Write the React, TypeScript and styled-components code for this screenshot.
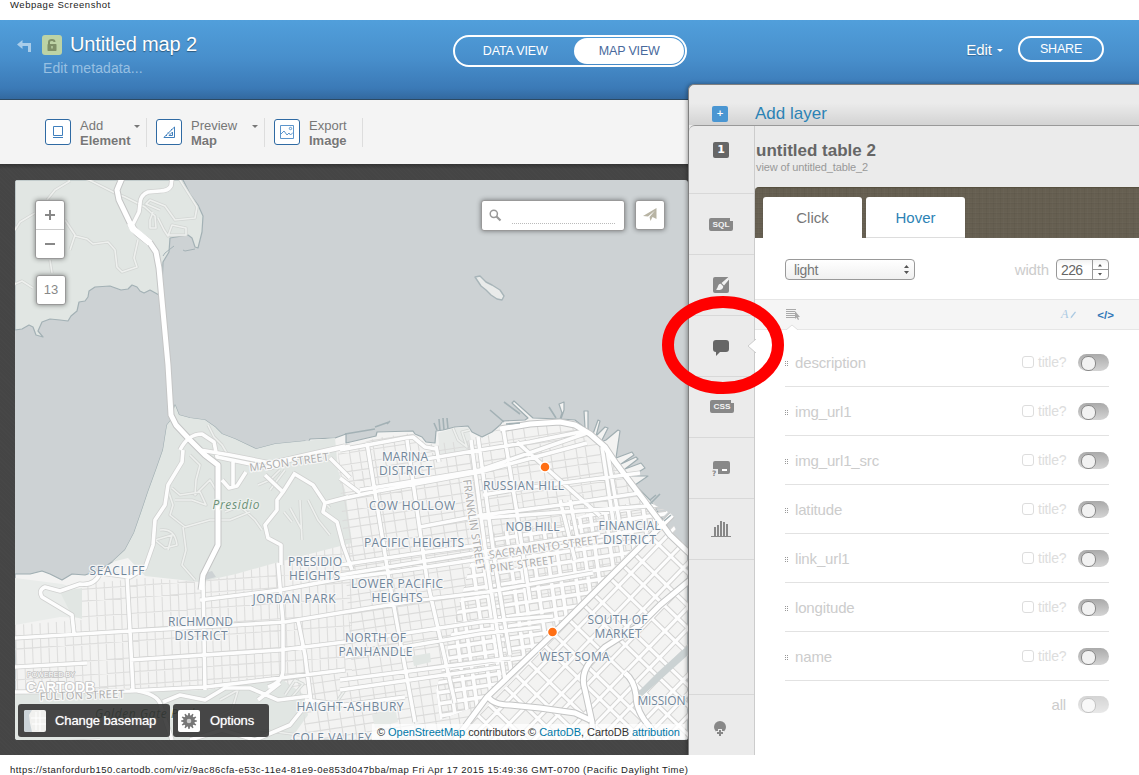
import React from "react";
import styled, { createGlobalStyle, css } from "styled-components";

const Global = createGlobalStyle`
  * { box-sizing: border-box; }
  html, body { margin: 0; padding: 0; background: #fff; }
  body { font-family: "Liberation Sans", Arial, sans-serif; overflow: hidden; }
`;

const Sheet = styled.div`
  width: 1139px;
  height: 775px;
  display: flex;
  flex-direction: column;
  color: #666;
`;

const PrintLine = styled.div<{ $bottom?: boolean }>`
  height: 20px;
  padding-left: 10px;
  font-size: 9.5px;
  letter-spacing: ${(p) => (p.$bottom ? 0.47 : 0.53)}px;
  line-height: ${(p) => (p.$bottom ? "29px" : "10px")};
  color: #222;
  white-space: nowrap;
`;

const AppFrame = styled.div`
  position: relative;
  height: 735px;
  display: flex;
  flex-direction: column;
  overflow: hidden;
`;

/* ---------- header ---------- */

const Header = styled.header`
  height: 80px;
  display: flex;
  align-items: flex-start;
  background: linear-gradient(#519fdb 0, #488fcc 38px, #3b7ab7 68px, #33699f 79px);
  border-bottom: 1px solid #2c4a63;
`;

const BackArrow = styled.svg`
  margin: 20px 0 0 17px;
  flex: none;
`;

const LockBadge = styled.div`
  width: 20px;
  height: 20px;
  margin: 15px 0 0 11px;
  border-radius: 3px;
  background: #bdd3a5;
  display: grid;
  place-items: center;
`;

const TitleBlock = styled.div`
  display: flex;
  flex: none;
  width: 453px;
`;

const MapTitle = styled.h1`
  margin: 12px 0 0 8px;
  font-size: 20px;
  line-height: 24px;
  letter-spacing: -0.15px;
  font-weight: 400;
  color: #fff;
  text-shadow: 0 1px 1px rgba(0, 0, 0, 0.4);
`;

const Metadata = styled.div`
  margin: 4px 0 0 -19px;
  font-size: 14px;
  line-height: 16px;
  letter-spacing: 0.1px;
  color: #98c0e2;
`;

const ViewSwitch = styled.div`
  width: 234px;
  height: 32px;
  margin-top: 15px;
  padding: 1px;
  display: flex;
  border: 2px solid #fff;
  border-radius: 16px;
`;

const ViewOption = styled.div<{ $active?: boolean }>`
  width: ${(p) => (p.$active ? 110 : 119)}px;
  height: 26px;
  border-radius: 13px;
  text-align: center;
  font-size: 12.5px;
  line-height: 26px;
  letter-spacing: -0.15px;
  color: ${(p) => (p.$active ? "#48699c" : "#fff")};
  background: ${(p) => (p.$active ? "#fff" : "transparent")};
`;

const HeaderActions = styled.div`
  margin-left: auto;
  padding: 16px 35px 0 0;
  display: flex;
  align-items: center;
`;

const EditLink = styled.div`
  font-size: 15px;
  line-height: 28px;
  color: #fff;
  display: flex;
  align-items: center;
  gap: 5px;
  text-shadow: 0 1px 1px rgba(0, 0, 0, 0.3);
`;

const Caret = styled.i<{ $color: string }>`
  border: 3px solid transparent;
  border-top-color: ${(p) => p.$color};
  border-bottom: 0;
`;

const ShareButton = styled.div`
  width: 86px;
  height: 26px;
  margin: -2px 0 0 15px;
  border: 2px solid #fff;
  border-radius: 13px;
  color: #fff;
  text-align: center;
  font-size: 12.5px;
  letter-spacing: -0.2px;
  line-height: 22px;
`;

/* ---------- toolbar ---------- */

const Toolbar = styled.div`
  height: 64px;
  padding: 18px 0 0 45px;
  display: flex;
  background: #f4f4f4;
`;

const Tool = styled.div<{ $width: number }>`
  width: ${(p) => p.$width}px;
  height: 29px;
  margin-right: 9px;
  display: flex;
  border-right: 1px solid #ddd;
`;

const ToolIcon = styled.div`
  width: 26px;
  height: 26px;
  margin-top: 1px;
  border: 1px solid #2f6aa3;
  border-radius: 3px;
  background: #fff;
  display: grid;
  place-items: center;
`;

const ToolText = styled.div`
  margin-left: 9px;
  font-size: 13px;
  line-height: 15px;
  color: #777;
  b { display: block; text-shadow: 0 1px 0 #fff; }
`;

const ToolCaret = styled(Caret)`
  margin: 7px 6px 0 auto;
  height: 3px;
`;

/* ---------- workspace / map ---------- */

const Workspace = styled.main`
  flex: 1;
  padding: 16px 0 15px 15px;
  background-color: #454545;
  background-image: linear-gradient(rgba(0, 0, 0, 0.25), transparent 5px),
    repeating-linear-gradient(45deg, rgba(255, 255, 255, 0.012) 0 1px, transparent 1px 3px);
`;

const MapCanvas = styled.div`
  position: relative;
  width: 673px;
  height: 560px;
  border-radius: 3px;
  overflow: hidden;
`;

const MapSvg = styled.svg`
  display: block;
`;

const control = css`
  position: absolute;
  background: #fff;
  border: 1px solid #999;
  border-radius: 3px;
  box-shadow: 0 0 5px rgba(0, 0, 0, 0.45);
`;

const ZoomControl = styled.div`
  ${control}
  left: 20px;
  top: 20px;
  width: 30px;
  height: 59px;
  display: flex;
  flex-direction: column;
`;

const ZoomButton = styled.div`
  flex: 1;
  display: grid;
  place-items: center;
  & + & { border-top: 1px solid #ccc; }
`;

const ZoomLevel = styled.div`
  ${control}
  left: 21px;
  top: 95px;
  width: 30px;
  height: 30px;
  text-align: center;
  font-size: 13px;
  line-height: 28px;
  color: #888;
`;

const SearchBox = styled.div`
  ${control}
  left: 466px;
  top: 20px;
  width: 144px;
  height: 31px;
  padding: 8px 9px 6px 7px;
  display: flex;
  gap: 10px;
`;

const SearchLine = styled.div`
  flex: 1;
  border-bottom: 1px dotted #bbb;
`;

const SendButton = styled.div`
  ${control}
  left: 620px;
  top: 20px;
  width: 30px;
  height: 30px;
  display: grid;
  place-items: center;
`;

const MapActions = styled.div`
  position: absolute;
  left: 3px;
  bottom: 3px;
  display: flex;
  gap: 3px;
`;

const MapAction = styled.div<{ $width: number }>`
  width: ${(p) => p.$width}px;
  height: 33px;
  padding-left: ${(p) => (p.$width > 100 ? 6 : 5)}px;
  border-radius: 3px;
  background: rgba(48, 48, 48, 0.88);
  display: flex;
  align-items: center;
  gap: ${(p) => (p.$width > 100 ? 9 : 10)}px;
  color: #fff;
  font-size: 13px;
  letter-spacing: -0.1px;
  text-shadow: 0 0 1px rgba(255, 255, 255, 0.7);
  svg { flex: none; }
`;

const Attribution = styled.div`
  position: absolute;
  left: 357px;
  bottom: 0;
  width: 313px;
  height: 16px;
  padding-left: 5px;
  background: rgba(255, 255, 255, 0.72);
  font-size: 11px;
  letter-spacing: -0.045px;
  line-height: 17px;
  white-space: nowrap;
  color: #333;
  span { color: #0078a8; }
`;

/* ---------- layer panel ---------- */

const LayerPanel = styled.aside`
  position: absolute;
  left: 688px;
  top: 64px;
  width: 451px;
  height: 671px;
  display: flex;
  flex-direction: column;
  background: #ebebeb;
  border: 1px solid #808080;
  border-width: 1px 0 0 1px;
  border-radius: 6px 0 0 0;
  box-shadow: -1px 0 4px rgba(0, 0, 0, 0.35);
`;

const AddLayer = styled.div`
  height: 40px;
  padding: 17px 0 0 23px;
  display: flex;
  gap: 27px;
  font-size: 17px;
  line-height: 23px;
  color: #2c83b5;
  background: linear-gradient(rgba(0, 0, 0, 0) 18px, rgba(0, 0, 0, 0.1) 40px);
  border-radius: 6px 0 0 0;
`;

const SquareBadge = styled.div<{ $color: string }>`
  width: 16px;
  height: 16px;
  border-radius: 2px;
  background: ${(p) => p.$color};
  color: #fff;
  text-align: center;
  font: bold 11px/16px "DejaVu Sans", sans-serif;
`;

const PlusBadge = styled(SquareBadge)`
  margin-top: 4px;
  font-size: 9px;
  line-height: 15px;
`;

const Layer = styled.section`
  flex: 1;
  display: flex;
  background: #ebebeb;
  border-top: 1px solid #999;
  border-radius: 6px 0 0 0;
`;

const Rail = styled.nav`
  width: 66px;
  border-right: 1px solid #ccc;
  display: flex;
  flex-direction: column;
`;

const RailCell = styled.div<{ $height?: number; $x?: number; $y?: number }>`
  position: relative;
  flex: none;
  height: ${(p) => p.$height ?? 61}px;
  padding-left: ${(p) => p.$x ?? 20}px;
  padding-top: ${(p) => p.$y ?? 20}px;
  border-bottom: 1px solid #d8d8d8;
  svg { display: block; }
  &:last-child { border-bottom: 0; }
`;

const ActiveNotch = styled.svg`
  position: absolute;
  right: -2px;
  top: 23px;
`;

const Content = styled.div`
  flex: 1;
  display: flex;
  flex-direction: column;
`;

const LayerHeading = styled.div`
  height: 61px;
  padding: 15px 0 0 1px;
  b { display: block; font-size: 17px; line-height: 19px; color: #666; }
  small { display: block; font-size: 11px; line-height: 15px; letter-spacing: -0.12px; color: #999; }
`;

const TabBar = styled.div`
  height: 51px;
  padding: 9px 0 0 8px;
  display: flex;
  gap: 4px;
  background-color: #665f51;
  background-image: repeating-linear-gradient(90deg, rgba(0, 0, 0, 0.035) 0 1px, transparent 1px 3px, rgba(255, 255, 255, 0.015) 3px 4px, transparent 4px 7px),
    repeating-linear-gradient(rgba(0, 0, 0, 0.04) 0 1px, transparent 1px 4px, rgba(255, 255, 255, 0.015) 4px 5px);
  border-radius: 4px 0 0 0;
  border-top: 1px solid #57503f;
`;

const Tab = styled.div<{ $active?: boolean }>`
  width: 99px;
  height: 41px;
  border-bottom: ${(p) => (p.$active ? "0" : "1px solid #ddd")};
  border-radius: 3px 3px 0 0;
  background: #fff;
  text-align: center;
  font-size: 15px;
  line-height: 42px;
  color: ${(p) => (p.$active ? "#777" : "#2c83b5")};
`;

const Form = styled.div`
  flex: 1;
  background: #fff;
  color: #ccc;
`;

const StyleRow = styled.div`
  height: 61px;
  padding: 21px 30px 0;
  display: flex;
  font-size: 15px;
`;

const Select = styled.div`
  width: 130px;
  height: 21px;
  padding: 0 5px 0 8px;
  border: 1px solid #999;
  border-radius: 4px;
  background: linear-gradient(#fff, #f0f0f0);
  display: flex;
  align-items: center;
  justify-content: space-between;
  font-size: 14px;
  letter-spacing: -0.3px;
  color: #777;
`;

const WidthLabel = styled.span`
  margin: 2px 7px 0 auto;
  letter-spacing: -0.15px;
  line-height: 18px;
`;

const Spinner = styled.div`
  width: 53px;
  height: 21px;
  padding-left: 4px;
  display: flex;
  border: 1px solid #999;
  border-radius: 4px;
  overflow: hidden;
  background: linear-gradient(#f2f2f2, #fff 6px);
  font-size: 14px;
  line-height: 20px;
  letter-spacing: -0.6px;
  color: #666;
  div { margin-left: auto; border-left: 1px solid #999; width: 16px; }
  svg { display: block; }
`;

const ModeBar = styled.div`
  position: relative;
  height: 31px;
  padding: 0 25px 0 31px;
  border: 1px solid #e6e6e6;
  border-width: 1px 0;
  background: #f5f5f5;
  display: flex;
  align-items: center;
`;

const ModeNotch = styled.svg`
  position: absolute;
  left: 31px;
  bottom: -1px;
`;

const CodeMark = styled.span`
  margin-left: 21px;
  font: bold 11.5px "Liberation Sans", sans-serif;
  color: #3178b8;
`;

const StyleMark = styled.span`
  margin-left: auto;
  display: flex;
  align-items: center;
  gap: 2px;
  font: italic 12px "Liberation Serif", serif;
  color: #aac9e2;
`;

const Fields = styled.div`
  padding: 8px 30px 0;
`;

const FieldRow = styled.div<{ $last?: boolean }>`
  height: ${(p) => (p.$last ? 47 : 49)}px;
  border-bottom: ${(p) => (p.$last ? "0" : "1px solid #e2e2e2")};
  display: flex;
  align-items: center;
`;

const GripMark = styled.svg`
  margin-top: 3px;
`;

const FieldName = styled.span`
  margin-left: 6px;
  font-size: 15px;
  letter-spacing: -0.15px;
`;

const CheckBox = styled.i`
  width: 12px;
  height: 12px;
  margin-left: auto;
  border: 1px solid #ddd;
  border-radius: 3px;
`;

const TitleLabel = styled.span<{ $all?: boolean }>`
  width: ${(p) => (p.$all ? "auto" : "28px")};
  margin: 0 12px 0 ${(p) => (p.$all ? "auto" : "4px")};
  font-size: ${(p) => (p.$all ? 15 : 14)}px;
  letter-spacing: -0.2px;
  color: ${(p) => (p.$all ? "#ccc" : "#ddd")};
`;

const Toggle = styled.i<{ $faded?: boolean }>`
  width: 31px;
  height: 17px;
  padding: 2px 0 0 3px;
  border-radius: 9px;
  background: linear-gradient(#aaa, #d4d4d4);
  opacity: ${(p) => (p.$faded ? 0.5 : 1)};
  &::before {
    content: "";
    display: block;
    width: 13px;
    height: 13px;
    border: 1px solid #888;
    border-radius: 7px;
    background: #f2f2f2;
  }
`;

const Highlight = styled.svg`
  position: absolute;
  left: 660px;
  top: 274px;
  pointer-events: none;
`;

/* ---------- map data ---------- */

const MARIN =
  "M15 180H183L190 194L198 205L203 216L202 232L198 248L195 247L192 238L188 235L170 238L169 252L163 262L162 285L159 295L150 290L144 293L140 291L137 287L132 285L128 289L121 290L110 286L95 287L89 291L88 297L85 301L79 302L77 311L71 316L68 321L60 320L50 319L42 322L38 331L43 337L36 335L33 327L29 325L22 329L15 330Z";

const CITY_LAND =
  "M15 574L30 574L42 571L50 574L62 580L72 574L85 575L100 570L112 562L125 550L134 533L142 510L148 492L156 470L163 450L167 425L171 420L175 405L179 415L190 418L205 420L215 427L222 434L235 439L256 449L275 444L305 441L307 445L310 439L335 438L346 434L346 443L376 436L377 432L413 431L415 434L422 437L426 442L435 443L436 431L443 430L455 427L468 426L472 432L482 437L492 432L500 425L503 421L525 420L528 418L512 403L514 401L533 418L560 419L562 413L559 404L564 402L564 410L561 419L575 420L585 428L584 411L588 411L588 430L593 434L598 420L600 421L596 436L605 427L608 428L601 442L606 440L618 430L620 431L616 458L632 452L634 455L621 464L636 457L638 459L625 469L641 463L645 468L632 476L648 476L635 485L650 500L665 523L672 535L688 552V740H15Z";

const PRESIDIO =
  "M112 562L125 550L134 533L142 510L148 492L156 470L163 450L167 425L171 420L175 405L179 415L190 418L205 420L215 427L222 434L235 439L256 449L275 444L305 441L335 438L338 470L345 490L352 543L275 563L236 574L200 582L145 576L128 558Z";

const RICHMOND = "M82 584L145 578L200 582L236 574L275 563L352 543L352 672L283 680L205 690L130 692L15 692V625L82 620Z";
const MIDTOWN =
  "M338 452L376 438L413 433L426 444L482 440L500 427L560 420L588 432L610 455L640 494L668 512L455 735L452 740H305L303 700L283 680L352 672Z";
const DOWNTOWN = "M478 535L560 522L600 510L645 500L668 512L480 705L440 720L436 690Z";
const SOMA = "M668 515L688 552V740H455Z";

const GG_PARK = "M15 694L130 692L205 690L283 680L303 694L308 715L290 740H15Z";

type Pt = [number, number];

/* Parallel street lines through a centre point, turned by an angle in degrees. */
function streets(angle: number, [cx, cy]: Pt, step: number, count: number, reach: number, wobble = 0) {
  const a = (angle * Math.PI) / 180;
  const dx = Math.cos(a);
  const dy = Math.sin(a);
  let d = "";
  for (let i = -count; i <= count; i++) {
    const off = i * step + (wobble ? Math.sin(i * 2.3) * wobble : 0);
    const x = cx - dy * off;
    const y = cy + dx * off;
    d += `M${(x - dx * reach).toFixed(1)} ${(y - dy * reach).toFixed(1)}L${(x + dx * reach).toFixed(1)} ${(y + dy * reach).toFixed(1)}`;
  }
  return d;
}

const richmondMinor =
  streets(88, [180, 640], 8.2, 24, 120) + streets(-4, [180, 610], 14.5, 8, 230, 1.5);
const midtownMinor =
  streets(-8.5, [450, 570], 9.3, 22, 260, 1.2) + streets(81.5, [450, 570], 11.8, 18, 230, 1.5);
const downtownGrid =
  streets(-8.5, [540, 600], 11, 18, 180, 0.8) + streets(82, [540, 600], 12.6, 12, 200, 1.5);
const somaGrid = streets(-46, [590, 640], 15.5, 14, 240, 2) + streets(44, [590, 640], 19, 12, 240, 2.5);

const MAJOR = [
  "M15 638L130 631L285 622L345 612L420 600L487 592L593 573",
  "M130 660L280 650L345 642L400 634L480 622L553 616",
  "M15 667L87 663",
  "M15 692L130 691L205 687L240 683L345 670",
  "M200 600L280 590L345 578L400 571L480 559L607 540",
  "M127 575L130 631L133 690",
  "M203 580L205 690",
  "M278 563L283 622L283 670Q283 682 268 687",
  "M298 620L305 655L312 710",
  "M305 700L345 705L405 697",
  "M15 745L100 741",
  "M367 443L390 585L415 722",
  "M407 440L427 580L455 703",
  "M436 446L439 462",
  "M471 440L488 570L505 680",
  "M478 437L496 570L510 655",
  "M503 427L517 513L530 600",
  "M340 450L405 438L413 437L425 447L436 449",
  "M345 498L378 491L480 472L587 443",
  "M360 490L480 470L587 433",
  "M420 460L480 450L530 442L585 431",
  "M483 495L525 488L640 473",
  "M420 527L483 515L560 505L640 493",
  "M483 518L647 506",
  "M340 565L420 553L480 545",
  "M340 575L480 552L600 533",
  "M340 690L500 667",
  "M340 680L510 658",
  "M345 657L480 634L540 627",
  "M560 500L575 560",
  "M602 447L613 520",
  "M607 450L619 520",
  "M570 500L578 540",
  "M517 442L545 467L600 516",
  "M340 478L360 493",
];

const ARTERIAL = [
  "M122 178L117 190L119 200L131 225L137 233L150 243L156 252L159 268L168 365L171 415L176 425L190 440L205 455L218 465L218 545L203 575L201 590",
  "M500 429L530 424L560 422L575 425L590 434L605 447L615 462L640 495L670 535L690 554",
  "M455 740L487 697L560 627L672 515",
  "M487 695Q492 705 510 705L540 708L575 713L590 720",
  "M593 740L592 722L585 690Q580 675 590 662L605 647L640 625L660 605L690 580",
  "M625 673Q634 680 636 695Q636 712 650 727L660 742",
];

const PARK_ROADS = [
  "M172 178L171 186Q168 191 160 191L148 192Q140 195 140 204L139 212L133 224",
  "M183 450L182 462L168 485L165 505L155 520L153 545L145 568L130 577L100 573",
  "M180 450Q188 434 202 434L214 442L217 457L270 468L295 458L350 446",
  "M200 450L230 455L270 463L345 446",
  "M222 480L229 488L237 486L246 472",
  "M233 462L233 486",
  "M265 475L283 492L277 500L277 510L265 525L268 538L281 545L281 565",
  "M283 492L295 473",
  "M293 473L313 485L325 503L323 512L337 522L343 545L352 570",
  "M325 503L348 497",
  "M330 458L350 478",
  "M100 573Q95 586 80 584L60 591L45 587Q38 590 42 597L72 615L74 634",
  "M130 690Q160 693 161 707L172 740",
  "M163 702L180 695L205 700L225 688L250 688L278 700L310 696",
  "M190 740L222 730L255 740L290 725L310 700",
  "M258 700L280 683",
];

const TRAILS = [
  "M47 200L55 190L70 181",
  "M85 178L115 193L125 197L145 207L155 216L156 228L150 228L150 220L153 212",
  "M15 230L20 222L35 213",
  "M65 220L75 235L70 250",
  "M75 236L87 239L93 244L108 242L115 250L117 267L122 272L137 267L134 258L138 240",
  "M15 284L22 281L33 288",
  "M50 260L52 273",
  "M180 180L197 207L195 218L175 220L165 206L150 200L146 204L160 210",
  "M158 218L164 230L168 236L172 225L186 228V235H168",
  "M172 488L180 495L200 492L206 505L192 500L175 500",
  "M190 455L200 465L196 480L195 495L210 480L216 490",
  "M168 490L173 505L170 515L185 527L210 520L230 520L250 512",
  "M183 527L186 550L182 565L195 580",
  "M160 530Q175 528 177 545L165 548L155 540L172 535L168 550",
  "M208 425L214 437L222 445L232 462",
  "M225 512L240 506L255 520L262 530",
  "M284 512L292 522M290 508L302 530M300 500L302 540M308 500L318 520L330 535M318 495L330 508",
  "M258 485L270 480L280 470M270 490L285 470",
  "M220 700L238 690L232 710L215 718M285 695L295 680L303 684L292 697",
  "M345 690L338 700M260 730L300 735",
  "M453 428L458 440L467 447L462 432L470 430",
];

type Label = { t: string; x: number; y: number; w: number };
const LABELS: Label[] = [
  { t: "MARINA", x: 405, y: 461, w: 46 },
  { t: "DISTRICT", x: 405.5, y: 475, w: 53 },
  { t: "COW HOLLOW", x: 412, y: 510, w: 86 },
  { t: "PACIFIC HEIGHTS", x: 414, y: 547, w: 100 },
  { t: "RUSSIAN HILL", x: 523.5, y: 490, w: 81 },
  { t: "NOB HILL", x: 532.5, y: 531, w: 54 },
  { t: "FINANCIAL", x: 629.5, y: 530, w: 62 },
  { t: "DISTRICT", x: 629.5, y: 544, w: 53 },
  { t: "PRESIDIO", x: 315, y: 566, w: 54 },
  { t: "HEIGHTS", x: 314.5, y: 580, w: 51 },
  { t: "SEACLIFF", x: 117, y: 575, w: 55 },
  { t: "JORDAN PARK", x: 294, y: 603, w: 83 },
  { t: "LOWER PACIFIC", x: 397, y: 588, w: 92 },
  { t: "HEIGHTS", x: 397, y: 602, w: 51 },
  { t: "RICHMOND", x: 200.5, y: 626, w: 65 },
  { t: "DISTRICT", x: 201, y: 640, w: 53 },
  { t: "NORTH OF", x: 375.5, y: 642, w: 61 },
  { t: "PANHANDLE", x: 375.5, y: 656, w: 74 },
  { t: "SOUTH OF", x: 617.5, y: 624, w: 60 },
  { t: "MARKET", x: 618, y: 638, w: 47 },
  { t: "WEST SOMA", x: 574.5, y: 661, w: 70 },
  { t: "HAIGHT-ASHBURY", x: 350, y: 711, w: 107 },
  { t: "COLE VALLEY", x: 332, y: 742, w: 79 },
  { t: "MISSION", x: 661.5, y: 705, w: 48 },
];

const HOODS_FONT = '"Open Sans", "Noto Sans", sans-serif';

function CityMap() {
  return (
    <MapSvg width="673" height="560" viewBox="15 180 673 560" fill="none" strokeLinejoin="round">
      <defs>
        <clipPath id="richmond"><path d={RICHMOND} /></clipPath>
        <clipPath id="midtown"><path d={MIDTOWN} /></clipPath>
        <clipPath id="downtown"><path d={DOWNTOWN} /></clipPath>
        <clipPath id="soma"><path d={SOMA} /></clipPath>
        <path id="franklin" d="M463 480Q470 530 478 574" />
      </defs>
      <rect x="15" y="180" width="673" height="560" fill="#cdd2d4" />
      <path d={MARIN} fill="#e1e6e3" stroke="#a3b1b5" strokeWidth="1.2" />
      <path d="M183 250L185 251L195 249M163 256L165 253L174 246" stroke="#a3b1b5" />
      <path d="M475 277L480 276L486 282L492 285L500 290L504 296L502 300L497 299L491 295L486 290L481 286Z" fill="#e9ebea" stroke="#a8b5b9" strokeWidth="1.4" />
      <path d={CITY_LAND} fill="#f3f3f2" stroke="#a0aeb2" strokeWidth="1.2" />
      <path d={PRESIDIO} fill="#e1e6e3" />
      <path d="M15 578L62 584L82 590V618L60 617L15 625Z" fill="#e9ecea" />
      <path d="M60 592L82 588V619L72 616Z" fill="#e1e6e3" />
      <path d={GG_PARK} fill="#e1e6e3" />
      <path d="M438 433L455 428L468 427L474 450L440 456Z" fill="#e7eae8" />
      <path d="M205 573L212 571L216 577L205 580Z" fill="#cdd2d4" />

      <g clipPath="url(#richmond)"><path d={richmondMinor} stroke="#dededd" strokeWidth="1.1" /></g>
      <g clipPath="url(#midtown)"><path d={midtownMinor} stroke="#dcdcdb" strokeWidth="1.1" /></g>
      <path d="M412 656L430 653L431 662L414 666Z" fill="#e1e6e3" />
      <path d="M372 715L395 708L398 722L375 728Z" fill="#e5e9e6" />
      <g clipPath="url(#downtown)">
        <path d={downtownGrid} stroke="#d4d4d3" strokeWidth="5.6" />
        <path d={downtownGrid} stroke="#fdfdfd" strokeWidth="3.6" />
      </g>
      <g clipPath="url(#soma)">
        <path d={somaGrid} stroke="#d4d4d3" strokeWidth="5.2" />
        <path d={somaGrid} stroke="#fdfdfd" strokeWidth="3.2" />
      </g>
      <path d="M640 698L688 655V645L658 672L634 696Z" fill="#cbd2d3" />

      <path d={TRAILS.join("")} stroke="#d3d6d4" strokeWidth="3.2" />
      <path d={TRAILS.join("")} stroke="#eef0ee" strokeWidth="1.6" />
      <path d={MAJOR.join("") + PARK_ROADS.join("")} stroke="#d0d1d0" strokeWidth="5.2" />
      <path d={ARTERIAL.join("")} stroke="#c4c5c5" strokeWidth="7" />
      <path d={MAJOR.join("") + PARK_ROADS.join("")} stroke="#fdfdfd" strokeWidth="3.6" />
      <path d={ARTERIAL.join("")} stroke="#fff" strokeWidth="5" />
      <path d="M130 223L133 229L150 243" stroke="#fff" strokeWidth="6.5" />

      <path d="M389 422L375 427M390 421L387 424M345 434L375 429M434 423L437 430M439 419L440 431M443 418L444 430M447 418L448 429M504 402L520 414M490 410L504 422M506 424L520 423M549 407L556 418M660 494L650 504M656 495L650 500M671 515L664 521" stroke="#a3b1b5" strokeWidth="1.6" />

      <g
        fontFamily={HOODS_FONT}
        fontSize="12"
        fontWeight="500"
        fill="#71869a"
        textAnchor="middle"
        stroke="#fafafa"
        strokeWidth="2.6"
        strokeOpacity="0.85"
        paintOrder="stroke"
      >
        {LABELS.map((l, i) => (
          <text key={i} x={l.x} y={l.y} textLength={l.w}>{l.t}</text>
        ))}
        <text x="236" y="509" textLength="47" fill="#6c9177" fontStyle="italic" stroke="#eef2ef">Presidio</text>
        <text x="146" y="718" textLength="102" fill="#4c7157" fontStyle="italic" stroke="#eef2ef">Golden Gate Park</text>
        <g fill="#aaa" fontSize="11">
          <text x="289" y="466" textLength="80" transform="rotate(-8 289 462)">MASON STREET</text>
          <text x="544" y="551" textLength="111" transform="rotate(-8 544 547)">SACRAMENTO STREET</text>
          <text x="522" y="568" textLength="65" transform="rotate(-8 522 564)">PINE STREET</text>
          <text x="82" y="699" textLength="85" transform="rotate(-2 82 696)">FULTON STREET</text>
          <text textAnchor="start"><textPath href="#franklin" textLength="92">FRANKLIN STREET</textPath></text>
        </g>
      </g>

      <g fontFamily='"Liberation Sans", sans-serif' fill="#fff" stroke="#c3c3c3" strokeWidth="1.6" paintOrder="stroke">
        <text x="27" y="677" fontSize="7" textLength="48">POWERED BY</text>
        <text x="26" y="692" fontSize="14" fontWeight="700" textLength="69">CARTODB</text>
      </g>
      <circle cx="545" cy="467" r="5" fill="#ff6f14" stroke="#fff" strokeWidth="1.4" />
      <circle cx="552.5" cy="632" r="5" fill="#ff6f14" stroke="#fff" strokeWidth="1.4" />
    </MapSvg>
  );
}

/* ---------- icons ---------- */

const WordIcon = ({ word }: { word: string }) => (
  <svg width="24" height="13" viewBox="0 0 24 13">
    <path d="M2 0H21V3H24V11Q24 13 22 13H2Q0 13 0 11V2Q0 0 2 0Z" fill="#888" />
    <text x="3.500" y="9.200" fontSize="7.200" fontWeight="700" fontFamily='"Liberation Sans", sans-serif' fill="#f4f4f4" textLength="17" lengthAdjust="spacingAndGlyphs">{word}</text>
  </svg>
);

const BrushIcon = () => (
  <svg width="16" height="16" viewBox="0 0 16 16">
    <path d="M2 0H15L16 3V14Q16 16 14 16H2Q0 16 0 14V2Q0 0 2 0Z" fill="#888" />
    <path d="M15.500 0L8.500 6L11 8.500L16 2.500ZM7.800 6.800C4.500 6.500 5.500 11 3 12.500C7 14 10.500 12 10.200 9.200Z" fill="#f2f2f2" />
  </svg>
);

const BubbleIcon = () => (
  <svg width="16" height="16" viewBox="0 0 16 16">
    <path d="M3 0H13Q16 0 16 3V9Q16 12 13 12H7L3 16V12Q0 12 0 9V3Q0 0 3 0Z" fill="#666" />
  </svg>
);

const LegendIcon = () => (
  <svg width="18" height="16" viewBox="0 0 18 16">
    <path d="M3 0H16Q18 0 18 2V11Q18 13 16 13H6V8H1V2Q1 0 3 0Z" fill="#888" />
    <path d="M10 8H15V10H10Z" fill="#fff" />
    <text x="0" y="15" fontSize="7.500" fontWeight="700" fontFamily='"DejaVu Sans", sans-serif' fill="#888">?</text>
  </svg>
);

const BarsIcon = () => (
  <svg width="20" height="16" viewBox="0 0 20 16" fill="#888">
    <path d="M0 15H20V16H0ZM3 6H5V15H3ZM6 4H8V15H6ZM9 0H11V15H9ZM12 1H14V15H12ZM15 3H17V15H15Z" />
  </svg>
);

const PinPlusIcon = () => (
  <svg width="12" height="16" viewBox="0 0 12 16">
    <circle cx="6" cy="6" r="6" fill="#888" />
    <path d="M6 8V16M2 12H10" stroke="#ebebeb" strokeWidth="4" />
    <path d="M6 9V15M3 12H9" stroke="#888" strokeWidth="2" />
  </svg>
);

const Gear = () => {
  const teeth = Array.from({ length: 12 }, (_, i) => i * 30);
  return (
    <svg width="22" height="22" viewBox="0 0 22 22">
      <rect width="22" height="22" rx="2" fill="#fff" />
      <g fill="#777">
        {teeth.map((a) => (
          <path key={a} d="M9.800 6L10.400 3H11.600L12.200 6Z" transform={`rotate(${a} 11 11)`} />
        ))}
        <circle cx="11" cy="11" r="5.800" />
      </g>
      <circle cx="11" cy="11" r="2.300" fill="#ccc" />
    </svg>
  );
};

const BasemapThumb = () => (
  <svg width="22" height="22" viewBox="0 0 22 22">
    <rect width="22" height="22" rx="2" fill="#f1f1ef" />
    <path d="M2 0H8L5 5L6 13L8 22H2Q0 22 0 20V2Q0 0 2 0Z" fill="#cbd3d8" />
    <path d="M12 2V20M16 1V21M7 8H22M8 14H22" stroke="#fff" />
  </svg>
);

const Grip = () => (
  <GripMark width="4" height="6" viewBox="0 0 4 6" fill="#999">
    <path d="M0 0H1V1H0ZM2 0H3V1H2ZM0 2H1V3H0ZM2 2H3V3H2ZM0 4H1V5H0ZM2 4H3V5H2Z" />
  </GripMark>
);

const FIELDS = ["description", "img_url1", "img_url1_src", "latitude", "link_url1", "longitude", "name"];

export default function App() {
  return (
    <Sheet>
      <Global />
      <PrintLine>Webpage Screenshot</PrintLine>
      <AppFrame>
        <Header>
          <TitleBlock>
            <BackArrow width="14" height="12" viewBox="0 0 14 12">
              <path d="M0 4.500L5.500 0V3H14V12H11V6H5.500V9Z" fill="#a9cdea" />
            </BackArrow>
            <LockBadge>
              <svg width="10" height="12" viewBox="0 0 10 12">
                <path d="M2 5V3Q2 1 5 1Q7.500 1 7.500 3" fill="none" stroke="#7f9068" strokeWidth="2" />
                <path d="M1 5H9Q9.500 5 9.500 6V11Q9.500 12 9 12H1Q0.500 12 0.500 11V6Q0.500 5 1 5ZM4.300 7V9.500H5.700V7Z" fill="#7f9068" />
              </svg>
            </LockBadge>
            <div>
              <MapTitle>Untitled map 2</MapTitle>
              <Metadata>Edit metadata...</Metadata>
            </div>
          </TitleBlock>
          <ViewSwitch>
            <ViewOption>DATA VIEW</ViewOption>
            <ViewOption $active>MAP VIEW</ViewOption>
          </ViewSwitch>
          <HeaderActions>
            <EditLink>Edit <Caret $color="#fff" /></EditLink>
            <ShareButton>SHARE</ShareButton>
          </HeaderActions>
        </Header>

        <Toolbar>
          <Tool $width={102}>
            <ToolIcon>
              <svg width="10" height="12" viewBox="0 0 10 12" fill="none" stroke="#3f7fbd">
                <path d="M0.500 0.500H9.500V9.500H0.500ZM0 11.500H10" />
              </svg>
            </ToolIcon>
            <ToolText>Add<b>Element</b></ToolText>
            <ToolCaret $color="#777" />
          </Tool>
          <Tool $width={109}>
            <ToolIcon>
              <svg width="12" height="12" viewBox="0 0 12 12" fill="none" stroke="#3f7fbd">
                <path d="M11.500 1V11.500H0.800ZM9.500 6V9.500H6ZM8 3L9 4M5 6.500L6 7.500M3 9L4 10" />
              </svg>
            </ToolIcon>
            <ToolText>Preview<b>Map</b></ToolText>
            <ToolCaret $color="#777" />
          </Tool>
          <Tool $width={89}>
            <ToolIcon>
              <svg width="14" height="14" viewBox="0 0 14 14" fill="none" stroke="#5c95cc">
                <path d="M0.500 0.500H13.500V13.500H0.500ZM1 9L4 6L7 10L9 8L10.500 10L13 7.500" />
                <circle cx="10.500" cy="3.500" r="1.200" />
              </svg>
            </ToolIcon>
            <ToolText>Export<b>Image</b></ToolText>
          </Tool>
        </Toolbar>

        <Workspace>
          <MapCanvas>
            <CityMap />
            <ZoomControl>
              <ZoomButton><svg width="10" height="10"><path d="M5 0V10M0 5H10" stroke="#888" strokeWidth="2" /></svg></ZoomButton>
              <ZoomButton><svg width="10" height="2"><path d="M0 1H10" stroke="#888" strokeWidth="2" /></svg></ZoomButton>
            </ZoomControl>
            <ZoomLevel>13</ZoomLevel>
            <SearchBox>
              <svg width="13" height="13" viewBox="0 0 13 13" fill="none" stroke="#999">
                <circle cx="4.800" cy="4.800" r="3.600" strokeWidth="1.500" />
                <path d="M7.500 7.500L11.500 11.500" strokeWidth="2.200" />
              </svg>
              <SearchLine />
            </SearchBox>
            <SendButton>
              <svg width="14" height="14" viewBox="0 0 14 14"><path d="M13.500 0V11L9.500 9L7.500 13L6.500 9L12 2.500L5 8.500L0 8Z" fill="#b8b4a4" /></svg>
            </SendButton>
            <MapActions>
              <MapAction $width={152}><BasemapThumb />Change basemap</MapAction>
              <MapAction $width={96}><Gear />Options</MapAction>
            </MapActions>
            <Attribution>
              © <span>OpenStreetMap</span> contributors © <span>CartoDB</span>, CartoDB <span>attribution</span>
            </Attribution>
          </MapCanvas>
        </Workspace>

        <LayerPanel>
          <AddLayer>
            <PlusBadge $color="#4a96d2">+</PlusBadge>
            Add layer
          </AddLayer>
          <Layer>
            <Rail>
              <RailCell $height={68} $x={24} $y={16}><SquareBadge $color="#666">1</SquareBadge></RailCell>
              <RailCell $y={24}><WordIcon word="SQL" /></RailCell>
              <RailCell $x={24} $y={22}><BrushIcon /></RailCell>
              <RailCell $x={24} $y={24}>
                <BubbleIcon />
                <ActiveNotch width="9" height="14" viewBox="0 0 9 14">
                  <path d="M9 0L1 7L9 14" fill="#fff" stroke="#ccc" />
                </ActiveNotch>
              </RailCell>
              <RailCell $x={21} $y={23}><WordIcon word="CSS" /></RailCell>
              <RailCell $x={23} $y={23}><LegendIcon /></RailCell>
              <RailCell $x={22} $y={22}><BarsIcon /></RailCell>
              <RailCell $height={135} />
              <RailCell $x={25} $y={26}><PinPlusIcon /></RailCell>
            </Rail>
            <Content>
              <LayerHeading>
                <b>untitled table 2</b>
                <small>view of untitled_table_2</small>
              </LayerHeading>
              <TabBar>
                <Tab $active>Click</Tab>
                <Tab>Hover</Tab>
              </TabBar>
              <Form>
                <StyleRow>
                  <Select>
                    light
                    <svg width="5" height="9" viewBox="0 0 5 9" fill="#555"><path d="M0 3H5L2.500 0ZM0 6H5L2.500 9Z" /></svg>
                  </Select>
                  <WidthLabel>width</WidthLabel>
                  <Spinner>
                    226
                    <div>
                      <svg width="15" height="19" viewBox="0 0 15 19">
                        <path d="M5 6.500H9L7 4ZM5 13H9L7 15.500Z" fill="#555" />
                        <path d="M0 9.500H15" stroke="#999" />
                      </svg>
                    </div>
                  </Spinner>
                </StyleRow>
                <ModeBar>
                  <svg width="14" height="11" viewBox="0 0 14 11">
                    <path d="M0 .5H10M0 2.500H9M0 4.500H9M0 6.500H9M0 8.500H9" stroke="#aaa" />
                    <path d="M9 2V10L10.500 8.500L12 11L13 10.500L12 8H14Z" fill="#aaa" />
                  </svg>
                  <StyleMark>
                    A
                    <svg width="6" height="9" viewBox="0 0 6 9"><path d="M0.500 8.500L1 6.500L5 1.500L6 2.300L2 7.500Z" fill="#aac9e2" /></svg>
                  </StyleMark>
                  <CodeMark>&lt;/&gt;</CodeMark>
                  <ModeNotch width="12" height="6" viewBox="0 0 12 6">
                    <path d="M0 6L6 1L12 6" fill="#fff" stroke="#e0e0e0" />
                  </ModeNotch>
                </ModeBar>
                <Fields>
                  {FIELDS.map((name) => (
                    <FieldRow key={name}>
                      <Grip />
                      <FieldName>{name}</FieldName>
                      <CheckBox />
                      <TitleLabel>title?</TitleLabel>
                      <Toggle />
                    </FieldRow>
                  ))}
                  <FieldRow $last>
                    <TitleLabel $all>all</TitleLabel>
                    <Toggle $faded />
                  </FieldRow>
                </Fields>
              </Form>
            </Content>
          </Layer>
        </LayerPanel>

        <Highlight width="126" height="102" viewBox="0 0 126 102">
          <ellipse cx="63" cy="51" rx="55" ry="43" fill="none" stroke="#f00" strokeWidth="12" />
        </Highlight>
      </AppFrame>
      <PrintLine $bottom>
        https://stanfordurb150.cartodb.com/viz/9ac86cfa-e53c-11e4-81e9-0e853d047bba/map Fri Apr 17 2015 15:49:36 GMT-0700 (Pacific Daylight Time)
      </PrintLine>
    </Sheet>
  );
}
